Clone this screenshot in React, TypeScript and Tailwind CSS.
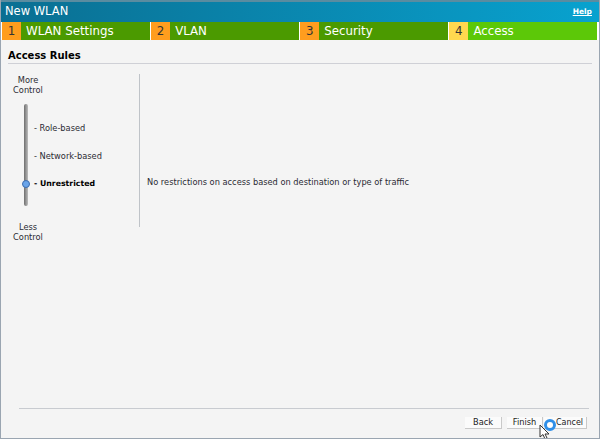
import React from 'react';

const steps = [
    { num: '1', label: 'WLAN Settings', active: false },
    { num: '2', label: 'VLAN', active: false },
    { num: '3', label: 'Security', active: false },
    { num: '4', label: 'Access', active: true },
];

const rules = [
    { label: '- Role-based', className: 'h-[28px] text-[#2b2b33]' },
    { label: '- Network-based', className: 'h-[28px] text-[#2b2b33]' },
    { label: '- Unrestricted', className: 'h-[28px] text-[7.8px] font-bold text-black' },
];

const App: React.FC = () => {
    return (
        <div className="relative flex h-[439px] w-[600px] flex-col overflow-hidden border-x border-b border-[#9aa5b1] bg-[#f4f4f4] font-['DejaVu_Sans',sans-serif]">
            {/* Title bar */}
            <div className="flex h-[22px] shrink-0 items-center justify-between border-t-2 border-[#5a8ca0] bg-gradient-to-r from-[#0a6f92] to-[#08a2cf] pl-1 pr-[7px]">
                <span className="text-[11.5px] text-white">New WLAN</span>
                <span className="text-[7.5px] font-bold text-white underline">Help</span>
            </div>

            {/* Wizard steps */}
            <div className="flex h-[18px] shrink-0 gap-[1.5px] bg-white pl-[1px] pr-[2px]">
                {steps.map((step) => (
                    <div key={step.num} className="flex flex-1 text-[11.8px] leading-[18px]">
                        <span className={`flex w-[19px] justify-center text-[#333] ${step.active ? 'bg-[#ffd84f]' : 'bg-[#ff9d1e]'}`}>
                            {step.num}
                        </span>
                        <span className={`flex-1 pl-[5px] text-white ${step.active ? 'bg-[#5cc808]' : 'bg-[#4b9a00]'}`}>
                            {step.label}
                        </span>
                    </div>
                ))}
            </div>

            <div className="flex flex-1 flex-col px-[7px]">
                <div className="mt-[9px] border-b border-[#cfd0d6] pb-[1px] text-[10px] leading-[13px] font-bold text-black">
                    Access Rules
                </div>

                <div className="mt-[10px] flex h-[153px]">
                    {/* Slider column */}
                    <div className="flex w-[132px] border-r border-[#bfc3c8] text-[8.25px] text-[#2b2b33]">
                        <div className="flex w-full flex-col pt-[1px]">
                            <div className="w-[40px] text-center leading-[10px]">
                                More
                                <br />
                                Control
                            </div>
                            <div className="mt-[9px] flex">
                                <div className="relative ml-[16px] h-[102px] w-[4px] rounded-sm bg-gradient-to-r from-[#6f6f6f] to-[#bdbdbd]">
                                    <span className="absolute top-[76px] -left-[2px] h-[8px] w-[8px] rounded-full border border-[#3d6db0] bg-[#6aa5ea]" />
                                </div>
                                <div className="ml-[6px] flex flex-col pt-[10px]">
                                    {rules.map((rule) => (
                                        <div key={rule.label} className={`flex items-center whitespace-nowrap ${rule.className}`}>
                                            {rule.label}
                                        </div>
                                    ))}
                                </div>
                            </div>
                            <div className="mt-[16px] w-[40px] text-center leading-[10px]">
                                Less
                                <br />
                                Control
                            </div>
                        </div>
                    </div>
                    <div className="flex flex-1 items-start pt-[103px] pl-[7px] text-[8.25px] leading-[10px] text-[#2b2b33]">
                        No restrictions on access based on destination or type of traffic
                    </div>
                </div>

                <div className="mt-auto ml-[11px] mr-[3px] flex justify-end gap-[1px] border-t border-[#c8cbd0] pt-[8px] pb-[9px] pr-[2px]">
                    <button className="mr-[4px] h-[12px] w-[37px] border-r border-b border-[#c9c9c9] bg-[#fbfbfb] text-[8.25px] leading-[11px] text-[#222]">Back</button>
                    <button className="h-[12px] w-[36px] border-r border-b border-[#c9c9c9] bg-[#fbfbfb] text-[8.25px] leading-[11px] text-[#222]">Finish</button>
                    <button className="h-[12px] w-[43px] border-r border-b border-[#c9c9c9] bg-[#fbfbfb] pl-[9px] text-[8px] leading-[11px] text-[#222]">Cancel</button>
                </div>
            </div>

            {/* Click ring and mouse pointer */}
            <span className="absolute top-[419px] left-[543px] h-[12px] w-[12px] rounded-full border-[3px] border-[#2f8fe8] bg-white" />
            <svg className="absolute top-[424px] left-[538px]" width="13" height="16" viewBox="0 0 13 16">
                <path d="M1 1 L1 13 L4 10.5 L6 15 L8 14 L6 10 L10 10 Z" fill="#fff" stroke="#333" strokeWidth="1" />
            </svg>
        </div>
    );
};

export default App;
